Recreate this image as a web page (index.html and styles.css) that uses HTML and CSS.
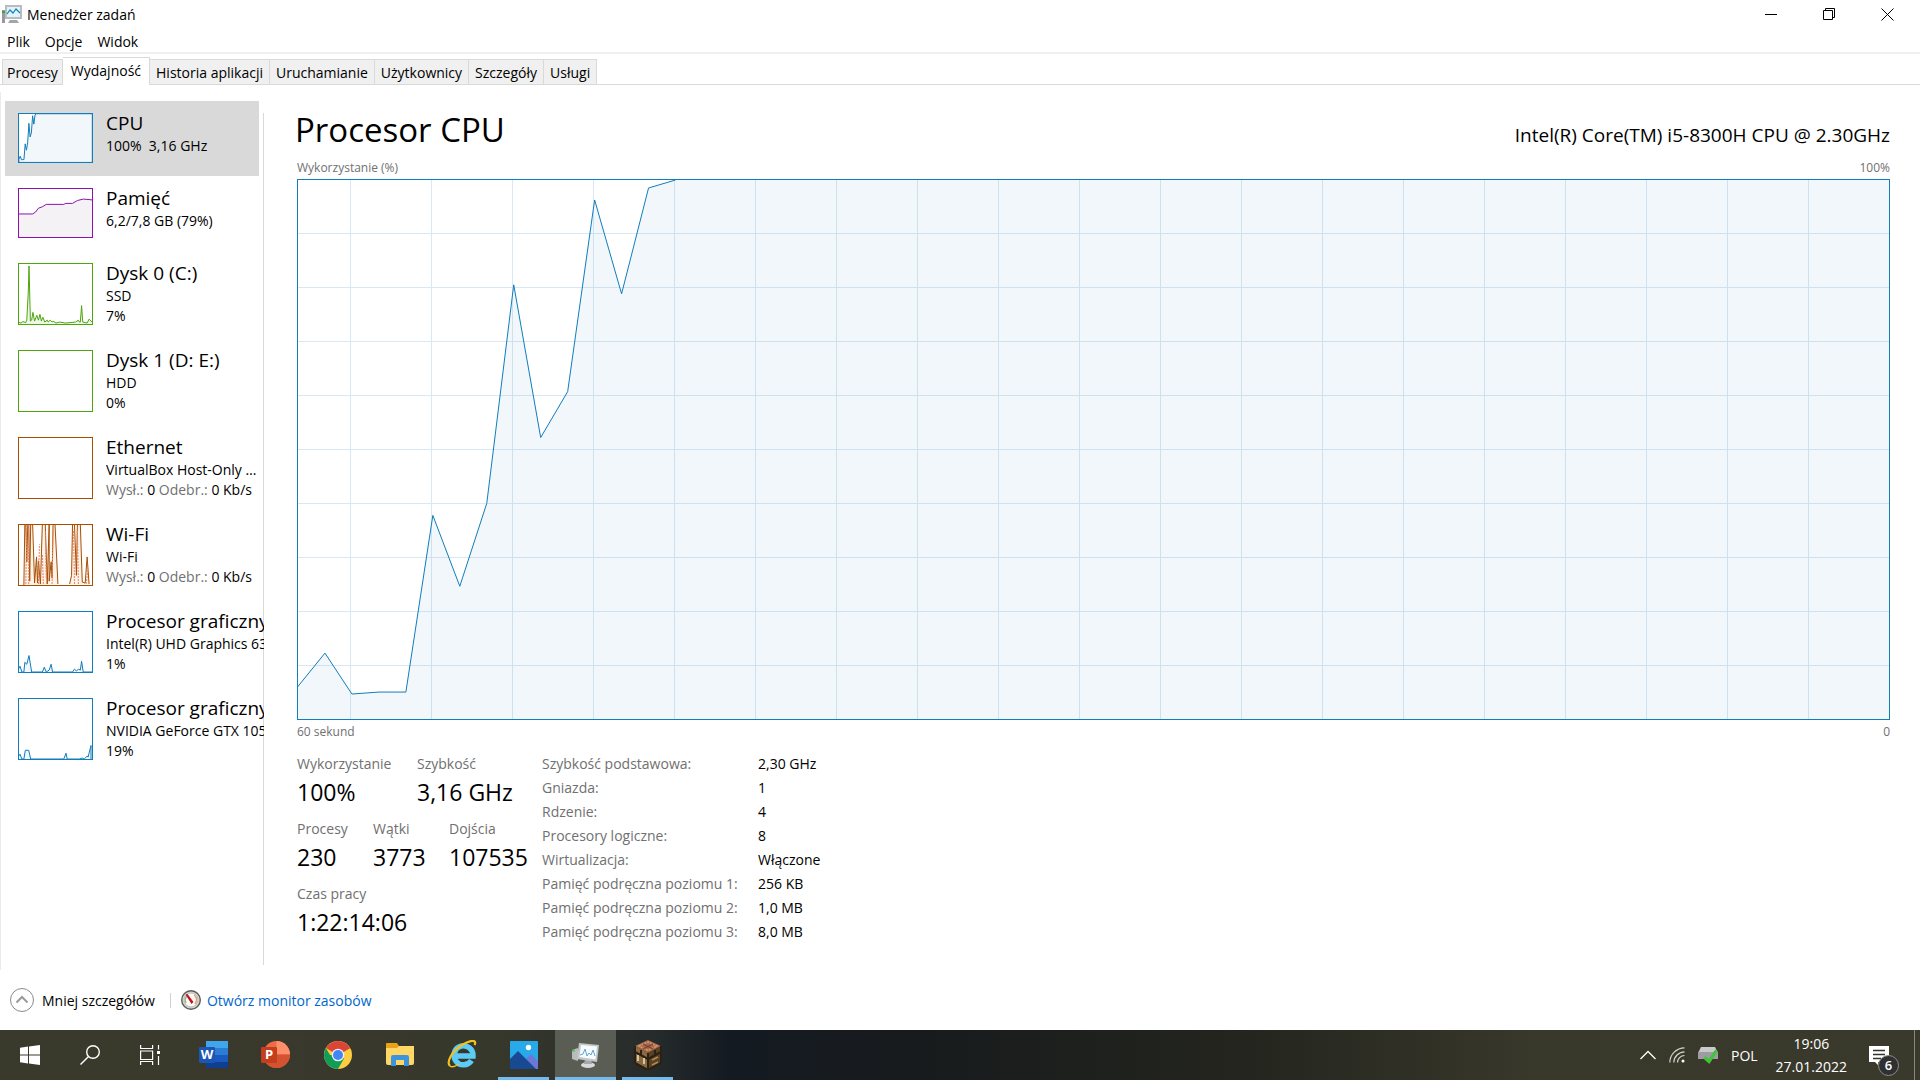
FILE: index.html
```html
<!DOCTYPE html>
<html lang="pl">

<head>
    <meta charset="UTF-8">
    <meta name="viewport" content="width=device-width, initial-scale=1.0">
    <title>Menedżer zadań</title>
    <link rel="stylesheet" href="styles.css">
</head>

<body>
    <div class="window">
        <header class="titlebar">
            <svg class="app-icon" width="20" height="20" viewBox="0 0 20 20">
                <rect x="0" y="6" width="3" height="13" fill="#9a9a9a" />
                <rect x="0" y="7" width="3" height="2" fill="#2fae2f" />
                <path d="M8 16h7l2 3H6z" fill="#a5a5a5" />
                <rect x="3" y="1" width="17" height="14" fill="#b9bcbe" />
                <rect x="5" y="3" width="13" height="10" fill="#dff3fb" />
                <path d="M5 10l3-4 3 3 3-4 4 4" fill="none" stroke="#1b7fb8" stroke-width="1.2" />
            </svg>
            <span class="title">Menedżer zadań</span>
            <div class="window-btns">
                <button class="window-btn" aria-label="Minimalizuj"><svg width="13" height="13" viewBox="0 0 13 13"><path d="M0 6.500h12" /></svg></button>
                <button class="window-btn" aria-label="Przywróć"><svg width="13" height="13" viewBox="0 0 13 13"><path d="M.5 2.500h9v9h-9zM2.500 2.500v-2h9v9h-2" /></svg></button>
                <button class="window-btn" aria-label="Zamknij"><svg width="13" height="13" viewBox="0 0 13 13"><path d="M.5.5l12 12M12.500.5l-12 12" /></svg></button>
            </div>
        </header>
        <nav class="menu">
            <button class="menu-btn">Plik</button>
            <button class="menu-btn">Opcje</button>
            <button class="menu-btn">Widok</button>
        </nav>
        <div class="tabs" role="tablist">
            <button class="tab" role="tab">Procesy</button>
            <button class="tab tab-active" role="tab" aria-selected="true">Wydajność</button>
            <button class="tab" role="tab">Historia aplikacji</button>
            <button class="tab" role="tab">Uruchamianie</button>
            <button class="tab" role="tab">Użytkownicy</button>
            <button class="tab" role="tab">Szczegóły</button>
            <button class="tab" role="tab">Usługi</button>
        </div>

        <div class="content">
            <aside class="sidebar">
                <button class="item item-active">
                    <svg class="thumb blue" viewBox="0 0 1593 540" preserveAspectRatio="none">
                        <rect class="thumb-bg" width="1593" height="540" />
                        <use href="#cpu-line" />
                    </svg>
                    <span class="item-text">
                        <span class="item-name">CPU</span>
                        <span class="item-info">100%&nbsp; 3,16 GHz</span>
                    </span>
                </button>
                <button class="item">
                    <svg class="thumb purple" viewBox="0 0 75 50" preserveAspectRatio="none">
                        <path d="M-1 51V26H14L17 24 20 20 24 18.500 28 16H46L48 15H55L60 12 66 10.500 72 11 76 11.500V51z" />
                    </svg>
                    <span class="item-text">
                        <span class="item-name">Pamięć</span>
                        <span class="item-info">6,2/7,8 GB (79%)</span>
                    </span>
                </button>
                <button class="item">
                    <svg class="thumb thumb-tall green" viewBox="0 0 75 62" preserveAspectRatio="none">
                        <path d="M-1 63V60L2 61 4 59.500 7 60.500 8 58 9.500 30 10.300 2 11.700 59 13 58 14.300 50 16 59 18.300 53 20 58 21.500 52 23 59 24.500 55 26.500 60 29 58 30 60 32 58 34 60 35 59 38 61 42 60 48 61 58 60 61 58 62 60 63 60 64.300 43 65.500 60 70 61 72 57 76 61V63z" />
                    </svg>
                    <span class="item-text">
                        <span class="item-name">Dysk 0 (C:)</span>
                        <span class="item-info">SSD</span>
                        <span class="item-info">7%</span>
                    </span>
                </button>
                <button class="item">
                    <svg class="thumb thumb-tall green" viewBox="0 0 75 62"></svg>
                    <span class="item-text">
                        <span class="item-name">Dysk 1 (D: E:)</span>
                        <span class="item-info">HDD</span>
                        <span class="item-info">0%</span>
                    </span>
                </button>
                <button class="item">
                    <svg class="thumb thumb-tall orange" viewBox="0 0 75 62"></svg>
                    <span class="item-text">
                        <span class="item-name">Ethernet</span>
                        <span class="item-info item-cut">VirtualBox Host-Only Network</span>
                        <span class="item-info"><span class="muted">Wysł.:</span> 0 <span class="muted">Odebr.:</span> 0 Kb/s</span>
                    </span>
                </button>
                <button class="item">
                    <svg class="thumb thumb-tall orange" viewBox="0 0 75 62" preserveAspectRatio="none">
                        <path d="M5 63L6-1H7L8 38 9-1H10L11 58 12-1H14L16 60 18 33 19 60 20 37 22 61 24-1H27L29 61 31-1V58L33 38 34 55 35-1H37L40 61M52 61L54 52 55-1H57L59 52 60-1H63L65 59 68 60 70 33 72 61" />
                        <path class="dotted" d="M7 61L8-1M10 61L10-1M20 61L21 20M25 61L24 30M28 55L27 5M34 61L35 5M57 61L56 5M61 61L60 5M69 61L71 45" />
                    </svg>
                    <span class="item-text">
                        <span class="item-name">Wi-Fi</span>
                        <span class="item-info">Wi-Fi</span>
                        <span class="item-info"><span class="muted">Wysł.:</span> 0 <span class="muted">Odebr.:</span> 0 Kb/s</span>
                    </span>
                </button>
                <button class="item">
                    <svg class="thumb thumb-tall blue" viewBox="0 0 75 62" preserveAspectRatio="none">
                        <path d="M-1 63V60L1 56 3 62H5L6 52 8 54 10.300 45 13 62H24L26 57 28 62 31 60 33 54 34.500 62H55L57 59 59 61 61 59 63 60 64.300 51 66 62H76V63z" />
                    </svg>
                    <span class="item-text">
                        <span class="item-name">Procesor graficzny 0</span>
                        <span class="item-info">Intel(R) UHD Graphics 630</span>
                        <span class="item-info">1%</span>
                    </span>
                </button>
                <button class="item">
                    <svg class="thumb thumb-tall blue" viewBox="0 0 75 62" preserveAspectRatio="none">
                        <path d="M-1 63V60L1 57 3 62H5L6.500 53H10L12 62H46L48.300 56 49.500 62H62L65 61 67 62 70 59 71 60 74 48V63z" />
                    </svg>
                    <span class="item-text">
                        <span class="item-name">Procesor graficzny 1</span>
                        <span class="item-info">NVIDIA GeForce GTX 1050</span>
                        <span class="item-info">19%</span>
                    </span>
                </button>
            </aside>

            <main class="main">
                <div class="main-head">
                    <h1>Procesor CPU</h1>
                    <span class="cpu-name">Intel(R) Core(TM) i5-8300H CPU @ 2.30GHz</span>
                </div>
                <div class="caption"><span>Wykorzystanie (%)</span><span>100%</span></div>
                <div class="chart">
                    <svg class="blue" viewBox="0 0 1593 540" preserveAspectRatio="none">
                        <path id="cpu-line" d="M-3 545V511L27 474 54 515 81 513H108L135 336 162 407 189 324 216 105 243 258 270 212 297 20 324 114 351 8 378 0V-3H1600V545z" />
                    </svg>
                </div>
                <div class="caption caption-bottom"><span>60 sekund</span><span>0</span></div>
                <div class="stats">
                    <div class="stats-left">
                        <dl class="stat-row">
                            <div class="stat stat-wide"><dt>Wykorzystanie</dt><dd>100%</dd></div>
                            <div class="stat"><dt>Szybkość</dt><dd>3,16 GHz</dd></div>
                        </dl>
                        <dl class="stat-row">
                            <div class="stat"><dt>Procesy</dt><dd>230</dd></div>
                            <div class="stat"><dt>Wątki</dt><dd>3773</dd></div>
                            <div class="stat"><dt>Dojścia</dt><dd>107535</dd></div>
                        </dl>
                        <dl class="stat-row">
                            <div class="stat"><dt>Czas pracy</dt><dd>1:22:14:06</dd></div>
                        </dl>
                    </div>
                    <table class="details">
                        <tr><th scope="row">Szybkość podstawowa:</th><td>2,30 GHz</td></tr>
                        <tr><th scope="row">Gniazda:</th><td>1</td></tr>
                        <tr><th scope="row">Rdzenie:</th><td>4</td></tr>
                        <tr><th scope="row">Procesory logiczne:</th><td>8</td></tr>
                        <tr><th scope="row">Wirtualizacja:</th><td>Włączone</td></tr>
                        <tr><th scope="row">Pamięć podręczna poziomu 1:</th><td>256 KB</td></tr>
                        <tr><th scope="row">Pamięć podręczna poziomu 2:</th><td>1,0 MB</td></tr>
                        <tr><th scope="row">Pamięć podręczna poziomu 3:</th><td>8,0 MB</td></tr>
                    </table>
                </div>
            </main>
        </div>

        <footer class="footer">
            <button class="less-btn">
                <svg width="24" height="24" viewBox="0 0 24 24" fill="none">
                    <circle cx="12" cy="12" r="11.500" stroke="#8a8a8a" />
                    <path d="M6.500 14.500L12 9l5.500 5.500" stroke="#9a9a9a" stroke-width="2" />
                </svg>
                Mniej szczegółów
            </button>
            <span class="separator"></span>
            <a class="monitor-link" href="#">
                <svg width="20" height="20" viewBox="0 0 20 20">
                    <circle cx="10" cy="10" r="9.300" fill="#d8d8d4" stroke="#5d5d5a" stroke-width="1.400" />
                    <circle cx="10" cy="10" r="7" fill="#fbfbf8" stroke="#b9b9b4" />
                    <path d="M5 13a6 6 0 0 1 1-7" fill="none" stroke="#9ab89a" stroke-width="1.500" />
                    <path d="M13 5a6 6 0 0 1 1 9" fill="none" stroke="#e8a070" stroke-width="1.500" />
                    <path d="M4.500 4.500l2-.5 6 8-2 2z" fill="#c2121c" />
                </svg>
                <span>Otwórz monitor zasobów</span>
            </a>
        </footer>
    </div>

    <div class="taskbar">
        <button class="start-btn" aria-label="Start">
            <svg width="20" height="20" viewBox="0 0 20 20" fill="#fff"><path d="M0 2.700l8-1.100v7.900H0zM9 1.400L20 0v9.500H9zM0 10.500h8v7.900l-8-1.100zM9 10.500h11V20L9 18.600z" /></svg>
        </button>
        <button class="start-btn" aria-label="Szukaj">
            <svg width="20" height="20" viewBox="0 0 20 20" fill="none" stroke="#fff" stroke-width="1.400"><circle cx="13" cy="7" r="6.300" /><path d="M8.500 11.500L.5 19.500" /></svg>
        </button>
        <button class="start-btn" aria-label="Widok zadań">
            <svg width="20" height="20" viewBox="0 0 20 20" fill="none" stroke="#fff" stroke-width="1.200"><path d="M.6 0v3.500h12V0M.6 20v-3.500h12V20M.6 6h12v8.500H.6zM18.500 0v4.500M18.500 11v9" /><path d="M17 6h3v3h-3z" fill="#fff" stroke="none" /></svg>
        </button>
        <div class="apps">
            <button class="app" aria-label="Word">
                <svg width="30" height="30" viewBox="0 0 30 30">
                    <path d="M7 1h22v7H7z" fill="#41a5ee" /><path d="M7 8h22v7H7z" fill="#2b7cd3" /><path d="M7 15h22v7H7z" fill="#185abd" /><path d="M7 22h22v6H7z" fill="#103f91" />
                    <rect x="0" y="7" width="16" height="16" rx="1" fill="#1a56b4" />
                    <text x="8" y="19" text-anchor="middle" class="glyph">W</text>
                </svg>
            </button>
            <button class="app" aria-label="PowerPoint">
                <svg width="30" height="30" viewBox="0 0 30 30">
                    <circle cx="15.500" cy="14.500" r="13.500" fill="#ed6c47" />
                    <path d="M15.500 1A13.500 13.500 0 0 1 29 14.500H15.500z" fill="#ff8f6b" />
                    <path d="M29 14.500a13.500 13.500 0 0 1-27 0z" fill="#d35230" />
                    <rect x="0" y="7" width="16" height="16" rx="1" fill="#c43e1c" />
                    <text x="8" y="19" text-anchor="middle" class="glyph">P</text>
                </svg>
            </button>
            <button class="app" aria-label="Chrome">
                <svg width="28" height="28" viewBox="0 0 28 28">
                    <circle cx="14" cy="14" r="14" fill="#ffcd40" />
                    <path d="M14 14L1.900 7A14 14 0 0 1 26.100 7z" fill="#db4437" />
                    <path d="M14 7h12.100L14 14z" fill="#db4437" />
                    <path d="M1.900 7A14 14 0 0 0 14 28l6-10.500L14 14H6z" fill="#0f9d58" />
                    <circle cx="14" cy="14" r="6.300" fill="#f1f1f1" />
                    <circle cx="14" cy="14" r="5" fill="#4285f4" />
                </svg>
            </button>
            <button class="app" aria-label="Eksplorator plików">
                <svg width="28" height="24" viewBox="0 0 28 24">
                    <path d="M0 1q0-1 1-1h10l2 3v4H0z" fill="#e8a317" />
                    <path d="M0 5h11l2-2h15v17q0 2-2 2H2q-2 0-2-2z" fill="#ffd766" />
                    <path d="M5 23v-9q0-2 2-2h14q2 0 2 2v9h-5v-6h-8v6z" fill="#3d94dc" />
                </svg>
            </button>
            <button class="app" aria-label="Internet Explorer">
                <svg width="30" height="30" viewBox="0 0 30 30" fill="none">
                    <path d="M24.500 20.500A9.500 9.500 0 1 1 26 16H9" stroke="#5ccbf5" stroke-width="5.500" />
                    <path d="M3 26C-1 22 5 11 15 5c7-4.500 12-5 13-3 .5 1.500-.5 3-.5 3" stroke="#f4c21f" stroke-width="2.200" />
                    <path d="M3 26c2 1.500 6 0 9-2" stroke="#f4c21f" stroke-width="1.500" />
                </svg>
            </button>
            <button class="app app-open" aria-label="Zdjęcia">
                <svg width="28" height="28" viewBox="0 0 28 28">
                    <rect width="28" height="28" rx="1" fill="#27a9ea" />
                    <path d="M13 21l8-8 7 7v8H13z" fill="#6b78d6" />
                    <path d="M0 18l8-8 18 18H0z" fill="#174a92" />
                    <circle cx="18.500" cy="6.500" r="2.700" fill="#fff" />
                </svg>
            </button>
            <button class="app app-open app-active" aria-label="Menedżer zadań">
                <svg width="28" height="28" viewBox="0 0 28 28">
                    <path d="M0 9l6-2v13l-6-2z" fill="#b9bcbd" />
                    <path d="M0 9h3v1.500H0z" fill="#4ac13d" />
                    <ellipse cx="16" cy="24" rx="7" ry="3" fill="#d7d9da" />
                    <path d="M13 18h6l1 5h-8z" fill="#a4a8aa" />
                    <path d="M7 2l20 2-2 17-20-3z" fill="#c4c7c8" />
                    <path d="M9 4l16 1.500-1.500 13L7.500 16z" fill="#f6fbfd" />
                    <path d="M8 14l3-1 2-5 2 7 2-3 2 2 2-5 2 6" fill="none" stroke="#5ba6d2" />
                </svg>
            </button>
            <button class="app app-open" aria-label="Minecraft">
                <svg width="28" height="30" viewBox="0 0 28 30">
                    <path d="M14 0l13 6-13 7L1 6z" fill="#a8694a" />
                    <path d="M5 6l9-4 9 4-9 4.500z" fill="none" stroke="#d49a76" stroke-width="1.500" stroke-dasharray="2 1" />
                    <path d="M9 4l10 5M19 4L9 9" stroke="#6d3b25" />
                    <path d="M1 6l13 7v17L1 23z" fill="#8a6a3e" />
                    <path d="M27 6l-13 7v17l13-7z" fill="#594224" />
                    <path d="M1 6v17M14 13v17M27 6v17M1 23l13 7 13-7M1 12l13 7 13-7M7 10v6M21 10v6" fill="none" stroke="#2b2013" stroke-width="2" />
                    <path d="M4 15v6M10 18v6" stroke="#d3c6a4" stroke-width="2" />
                    <path d="M18 20l6-3M18 25l6-3" stroke="#b08a52" stroke-width="1.500" />
                </svg>
            </button>
        </div>
        <div class="tray">
            <svg width="16" height="10" viewBox="0 0 16 10" fill="none" stroke="#fff" stroke-width="1.300"><path d="M.5 9L8 1.500 15.500 9" /></svg>
            <svg width="16" height="16" viewBox="0 0 16 16" fill="none" stroke="#d6d6d2" stroke-width="1.200">
                <path d="M.8 15.500A15 15 0 0 1 15.500.8M4.800 15.500A11 11 0 0 1 15.500 4.800M8.500 15.500a7 7 0 0 1 7-7" />
                <circle cx="14" cy="14" r="1.500" fill="#fff" stroke="none" />
            </svg>
            <svg width="20" height="18" viewBox="0 0 20 18">
                <path d="M3 1h14l3 6H0z" fill="#c9c9cd" /><path d="M0 6h20v7H0z" fill="#9c9ca2" />
                <path d="M6.500 11.500l4.500 4 7.500-11" fill="none" stroke="#3fc43a" stroke-width="3.200" />
            </svg>
            <span class="lang">POL</span>
            <time class="clock"><span>19:06</span><span>27.01.2022</span></time>
            <button class="notify" aria-label="Powiadomienia">
                <svg width="20" height="19" viewBox="0 0 20 19"><path d="M0 0h20v16H9v3l-3-3H0z" fill="#fff" /><path d="M4 4.500h12M4 8.500h12M4 12.500h8" stroke="#33342a" stroke-width="1.300" /></svg>
                <span class="badge">6</span>
            </button>
            <span class="show-desktop"></span>
        </div>
    </div>
</body>

</html>
```

FILE: styles.css
```css
* {
    margin: 0;
    padding: 0;
    box-sizing: border-box;
}

body {
    height: 100vh;
    display: flex;
    flex-direction: column;
    overflow: hidden;
    background-color: #fff;
    color: #000;
    font-family: "Segoe UI", "Open Sans", "Noto Sans", sans-serif;
    font-size: 14px;
}

button {
    border: none;
    background: none;
    font: inherit;
    color: inherit;
}

svg {
    display: block;
    flex-shrink: 0;
}

.window {
    flex: 1;
    min-height: 0;
    display: flex;
    flex-direction: column;
}

/* title bar and menu */
.titlebar {
    height: 28px;
    display: flex;
    align-items: center;
    padding-left: 2px;
    padding-right: 4px;
}

.title {
    margin-left: 5px;
}

.window-btns {
    display: flex;
    margin-left: auto;
}

.window-btn {
    width: 58px;
    height: 28px;
    display: flex;
    align-items: center;
    justify-content: center;
}

.window-btn path {
    fill: none;
    stroke: #000;
}

.menu {
    height: 26px;
    display: flex;
    gap: 15px;
    padding-top: 2px;
    padding-left: 7px;
    border-bottom: 2px solid #f0f0f0;
}

/* tabs */
.tabs {
    height: 31px;
    display: flex;
    align-items: flex-end;
    padding-left: 2px;
    border-bottom: 1px solid #d9d9d9;
}

.tab {
    height: 25px;
    padding: 0 6px;
    background-color: #f0f0f0;
    border: 1px solid #d9d9d9;
    border-left: none;
    border-bottom: none;
    white-space: nowrap;
}

.tab:first-child {
    padding: 0 4px;
    border-left: 1px solid #d9d9d9;
}

.tab-active {
    height: 28px;
    margin-bottom: -1px;
    padding: 0 8px 3px;
    background-color: #fff;
}

.content {
    flex: 1;
    min-height: 0;
    display: flex;
    margin-top: 7px;
    border-left: 1px solid #ebebeb;
}

/* resource list */
.sidebar {
    width: 263px;
    flex-shrink: 0;
    padding: 9px 0 0 4px;
    margin-bottom: 5px;
    overflow: hidden;
    background: linear-gradient(#d9d9d9, #d9d9d9) right 21px / 1px 100% no-repeat;
}

.item {
    width: 254px;
    display: flex;
    align-items: flex-start;
    gap: 13px;
    padding: 12px 0 13px 13px;
    text-align: left;
    white-space: nowrap;
}

.item-active {
    background-color: #d9d9d9;
}

.thumb {
    width: 75px;
    height: 50px;
    border: 1px solid;
    background-color: #fff;
}

.thumb-tall {
    height: 62px;
}

.thumb-bg {
    fill: #fff;
    stroke: none;
}

.thumb path,
.chart path {
    vector-effect: non-scaling-stroke;
}

.item-text {
    flex: 1;
    min-width: 0;
    margin-top: -3px;
    margin-bottom: -1px;
}

.item-name {
    display: block;
    font-size: 19px;
    line-height: 26px;
}

.item-info {
    display: block;
    line-height: 20px;
}

.item-cut {
    overflow: hidden;
    text-overflow: ellipsis;
}

.muted {
    color: #707070;
}

.blue {
    border-color: #117dbb;
    stroke: #117dbb;
    fill: rgba(17, 125, 187, 0.06);
}

.purple {
    border-color: #8b12ae;
    stroke: #8b12ae;
    fill: #f4f2f4;
}

.green {
    border-color: #4da60c;
    stroke: #4da60c;
    fill: #eff7e9;
}

.orange {
    border-color: #a74f01;
    stroke: #a74f01;
    fill: #fcf3eb;
}

.orange .dotted {
    fill: none;
    stroke: #f08060;
    stroke-dasharray: 2 1;
}

/* main panel */
.main {
    flex: 1;
    min-width: 0;
    display: flex;
    flex-direction: column;
    padding: 16px 30px 26px 33px;
}

.main-head {
    display: flex;
    justify-content: space-between;
    align-items: baseline;
    margin-left: -2px;
    margin-bottom: 5px;
}

h1 {
    font-size: 33px;
    font-weight: normal;
    line-height: 44px;
}

.cpu-name {
    font-size: 19px;
}

.caption {
    display: flex;
    justify-content: space-between;
    color: #707070;
    font-size: 12px;
    line-height: 22px;
}

.caption-bottom {
    line-height: 24px;
    margin-bottom: 8px;
}

.chart {
    flex: 1;
    min-height: 0;
    border: 1px solid #117dbb;
    background-image: linear-gradient(to right, #d9e8f2 1px, transparent 1px), linear-gradient(#d9e8f2 1px, transparent 1px);
    background-size: 81px 54px;
    background-position: right bottom;
}

.chart svg {
    width: 100%;
    height: 100%;
}

.stats {
    display: flex;
}

.stats-left {
    width: 245px;
}

.stat-row {
    display: flex;
    margin-bottom: 9px;
}

.stat-row:last-child {
    margin-bottom: 0;
}

.stat {
    min-width: 76px;
}

.stat-wide {
    min-width: 120px;
}

dt {
    color: #707070;
    line-height: 24px;
}

dd {
    font-size: 23px;
    line-height: 32px;
}

.details {
    height: 192px;
    border-collapse: collapse;
    line-height: 24px;
}

.details th {
    width: 216px;
    color: #707070;
    font-weight: normal;
    text-align: left;
    white-space: nowrap;
}

/* bottom line of the window */
.footer {
    height: 60px;
    display: flex;
    align-items: center;
    padding-left: 10px;
}

.less-btn,
.monitor-link {
    display: flex;
    align-items: center;
}

.less-btn {
    gap: 8px;
}

.separator {
    width: 1px;
    height: 15px;
    margin: 0 10px 0 15px;
    background-color: #d0d0d0;
}

.monitor-link {
    gap: 6px;
    color: #0066cc;
    text-decoration: none;
}

/* taskbar */
.taskbar {
    height: 50px;
    display: flex;
    background: linear-gradient(to right, #3a3a2c 0%, #37382c 26%, #262b2b 34%, #141a22 38%, #181b1d 48%, #24251e 65%, #38382b 80%, #3a3a2c 100%);
    color: #fff;
}

.start-btn {
    width: 60px;
    display: flex;
    align-items: center;
    justify-content: center;
}

.apps {
    display: flex;
    gap: 1px;
    margin-left: 3px;
}

.app {
    width: 61px;
    display: flex;
    align-items: center;
    justify-content: center;
    border-top: 3px solid transparent;
    border-bottom: 3px solid transparent;
}

.app-open {
    background: linear-gradient(#76b9ed, #76b9ed) center bottom / 51px 3px no-repeat border-box;
}

.app-active {
    background-color: #595d53;
    background-size: 61px 3px;
}

.glyph {
    fill: #fff;
    stroke: none;
    font-size: 13px;
    font-weight: bold;
}

.tray {
    display: flex;
    align-items: center;
    margin-left: auto;
}

.tray svg {
    margin-right: 13px;
}

.lang {
    margin-right: 18px;
}

.clock {
    display: flex;
    flex-direction: column;
    align-items: center;
    line-height: 23px;
}

.notify {
    position: relative;
    margin-left: 22px;
}

.notify svg {
    margin: 0;
}

.badge {
    position: absolute;
    left: 9px;
    top: 9px;
    width: 21px;
    height: 21px;
    border: 1px solid #8d8e86;
    border-radius: 50%;
    background-color: #2f3032;
    font-size: 13px;
    font-weight: 600;
    line-height: 18px;
    text-align: center;
}

.show-desktop {
    width: 6px;
    height: 50px;
    margin-left: 25px;
    border-left: 1px solid #86877e;
}
```
